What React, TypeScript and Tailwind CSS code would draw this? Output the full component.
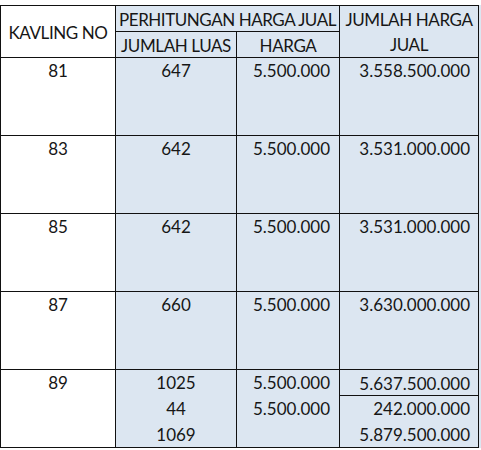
import React from "react";

const BLUE = "bg-[#dce6f1]";

type Row = { no: string; luas: string[]; harga: string[]; jumlah: string[]; split?: boolean };

const rows: Row[] = [
  { no: "81", luas: ["647"], harga: ["5.500.000"], jumlah: ["3.558.500.000"] },
  { no: "83", luas: ["642"], harga: ["5.500.000"], jumlah: ["3.531.000.000"] },
  { no: "85", luas: ["642"], harga: ["5.500.000"], jumlah: ["3.531.000.000"] },
  { no: "87", luas: ["660"], harga: ["5.500.000"], jumlah: ["3.630.000.000"] },
  {
    no: "89",
    luas: ["1025", "44", "1069"],
    harga: ["5.500.000", "5.500.000"],
    jumlah: ["5.637.500.000", "242.000.000", "5.879.500.000"],
    split: true,
  },
];

export default function App() {
  return (
    <div
      className="w-[481px] h-[450px] bg-white text-[#161616] text-[17px] overflow-hidden"
      style={{ fontFamily: "Lato, 'Open Sans', sans-serif" }}
    >
      <div className="h-[5px]" />
      <div className="flex">
        <div className="grid grid-cols-[114px_120px_102px_138px] grid-rows-[25px_25px_77px_77px_77px_77px_77px] gap-px bg-[#111] p-px w-fit">
          <div className="row-span-2 bg-white flex items-center justify-center leading-[25px] tracking-[-0.4px] pt-px">
            KAVLING NO
          </div>
          <div className={`col-span-2 ${BLUE} text-center leading-[25px] pt-px whitespace-nowrap tracking-[-0.45px]`}>
            PERHITUNGAN HARGA JUAL
          </div>
          <div className={`row-span-2 ${BLUE} text-center leading-[25px] pt-px tracking-[-0.4px]`}>
            <div>JUMLAH HARGA</div>
            <div>JUAL</div>
          </div>
          <div className={`${BLUE} text-center leading-[25px] pt-px tracking-[-0.4px]`}>JUMLAH LUAS</div>
          <div className={`${BLUE} text-center leading-[25px] pt-px tracking-[-0.4px]`}>HARGA</div>

          {rows.map((r) => (
            <React.Fragment key={r.no}>
              <div className="bg-white text-center leading-[26px]">{r.no}</div>
              <div className={`${BLUE} text-center leading-[26px]`}>
                {r.luas.map((v, i) => (
                  <div key={i} className={i === 0 ? "h-[26px]" : "h-[25.5px] leading-[25.5px]"}>
                    {v}
                  </div>
                ))}
              </div>
              <div className={`${BLUE} text-right pr-[9px] leading-[26px]`}>
                {r.harga.map((v, i) => (
                  <div key={i} className={i === 0 ? "h-[26px]" : "h-[25.5px] leading-[25.5px]"}>
                    {v}
                  </div>
                ))}
              </div>
              <div className={`${BLUE} text-right leading-[26px]`}>
                {r.split ? (
                  <>
                    <div className="h-[26px] border-b border-[#111] pr-[8px] leading-[25px] pt-px">{r.jumlah[0]}</div>
                    <div className="h-[25.5px] leading-[25.5px] pr-[8px]">{r.jumlah[1]}</div>
                    <div className="h-[25.5px] leading-[25.5px] pr-[8px]">{r.jumlah[2]}</div>
                  </>
                ) : (
                  <div className="pr-[8px]">{r.jumlah[0]}</div>
                )}
              </div>
            </React.Fragment>
          ))}
        </div>
        <div className={`flex-1 ${BLUE}`} />
      </div>
    </div>
  );
}
